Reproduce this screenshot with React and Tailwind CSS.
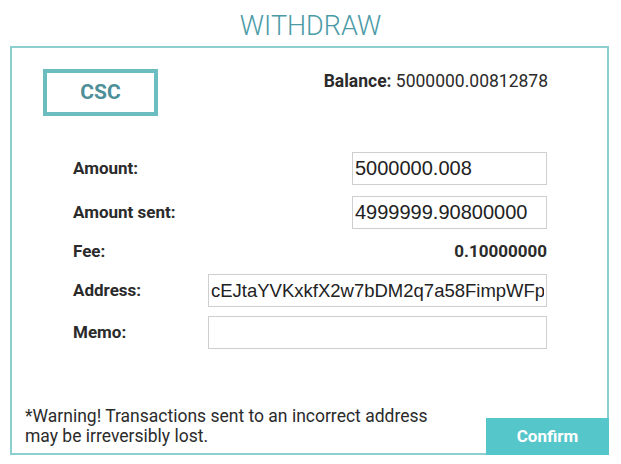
const LABEL = 'text-[17px] font-bold text-[#2b2b2b]'
const INPUT =
  "h-[33px] border border-[#cfcfcf] bg-white px-[2px] text-[#222] outline-none font-['Liberation_Sans',sans-serif]"

function Row({ label, children, className = '' }) {
  return (
    <div className={`flex items-center justify-between ${className}`}>
      <span className={LABEL}>{label}</span>
      {children}
    </div>
  )
}

export default function App() {
  return (
    <div className="w-[621px] h-[464px] bg-white font-['Roboto',sans-serif] overflow-hidden">
      <h1 className="h-[46px] pt-[10px] text-center text-[27px] leading-[32px] font-light text-[#4b9ba6]">
        WITHDRAW
      </h1>

      <div className="ml-[10px] w-[599px] h-[409px] border-2 border-[#8ccfd1] flex flex-col">
        {/* currency + balance */}
        <div className="flex items-start justify-between pl-[31px] pr-[59px] pt-[21px]">
          <div className="w-[115px] h-[47px] border-4 border-[#6bbdc0] flex items-center justify-center text-[21px] font-bold text-[#4d8f98]">
            CSC
          </div>
          <div className="-mt-[1px] text-[17.5px] text-[#2b2b2b]">
            <span className="font-bold">Balance:</span> 5000000.00812878
          </div>
        </div>

        {/* form */}
        <div className="pl-[61px] pr-[60px] pt-[36px]">
          <Row label="Amount:">
            <input className={`${INPUT} w-[195px] text-[20px]`} defaultValue="5000000.008" />
          </Row>
          <Row label="Amount sent:" className="mt-[11px]">
            <input className={`${INPUT} w-[195px] text-[20px]`} defaultValue="4999999.90800000" />
          </Row>
          <Row label="Fee:" className="mt-[6px] h-[33px]">
            <span className="text-[17px] font-bold text-[#2b2b2b]">0.10000000</span>
          </Row>
          <Row label="Address:" className="mt-[6px]">
            <input
              className={`${INPUT} w-[339px] text-[18.5px] border-[#7ccaca]`}
              defaultValue="cEJtaYVKxkfX2w7bDM2q7a58FimpWFpPt3"
            />
          </Row>
          <Row label="Memo:" className="mt-[9px]">
            <input className={`${INPUT} w-[339px] text-[18.5px]`} defaultValue="" />
          </Row>
        </div>

        {/* warning + confirm */}
        <div className="mt-auto flex items-end justify-between">
          <p className="pl-[13px] pb-[7px] text-[17.5px] leading-[20px] text-[#2b2b2b]">
            *Warning! Transactions sent to an incorrect address
            <br />
            may be irreversibly lost.
          </p>
          <button className="-mr-[2px] -mb-[2px] w-[123px] h-[37px] bg-[#55c6c9] text-[17px] font-bold text-white">
            Confirm
          </button>
        </div>
      </div>
    </div>
  )
}
